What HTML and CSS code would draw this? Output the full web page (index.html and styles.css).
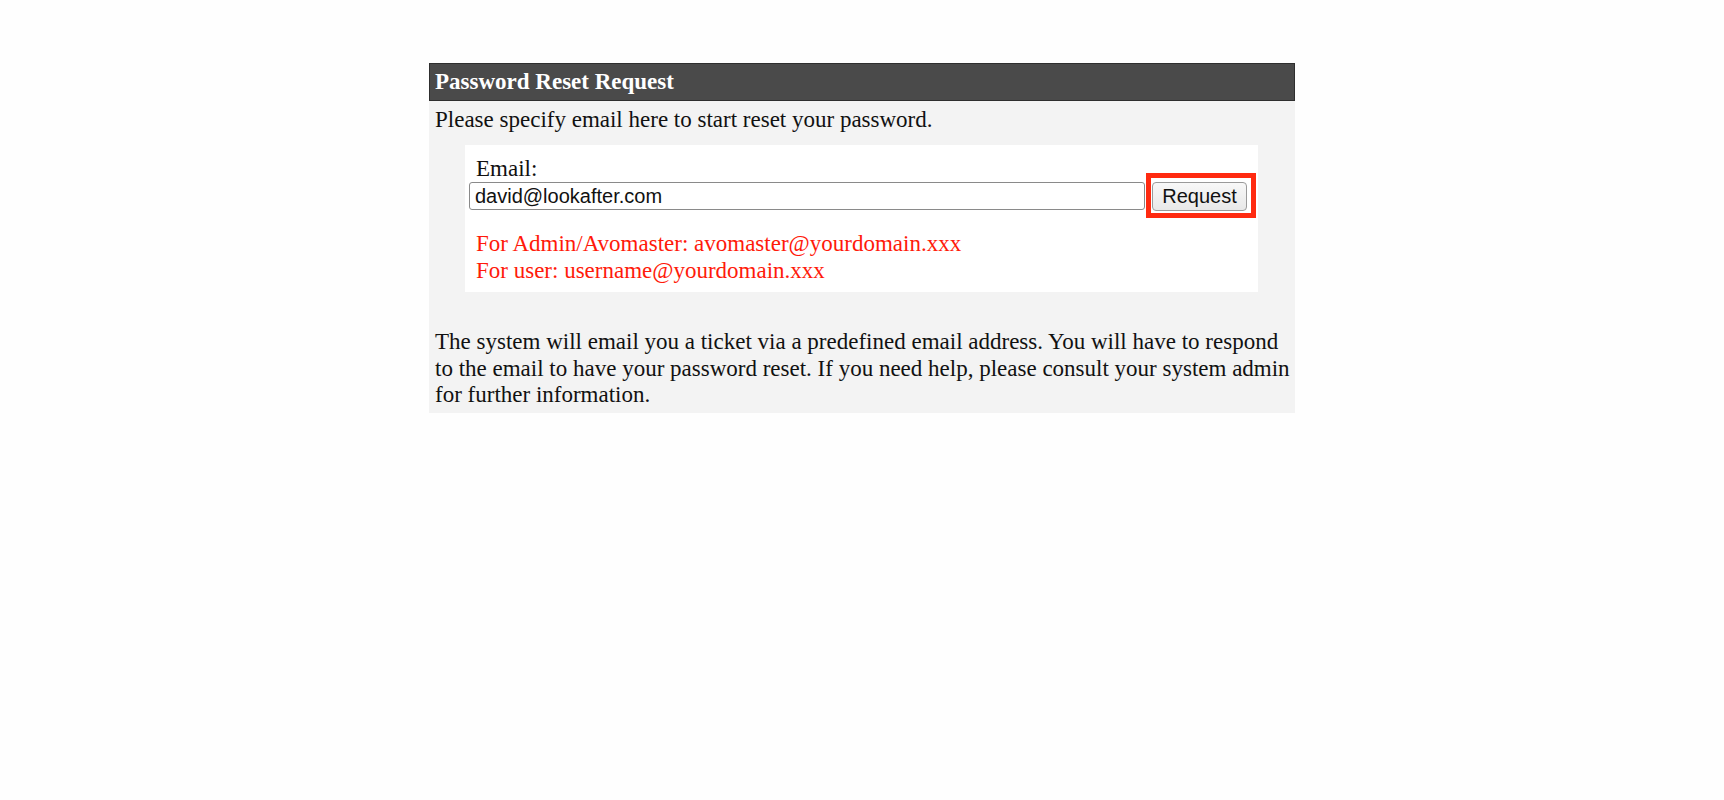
FILE: index.html
```html
<!DOCTYPE html>
<html>
<head>
<meta charset="utf-8">
<title>Password Reset Request</title>
<link rel="stylesheet" href="styles.css">
</head>
<body>
<div class="panel">
  <div class="panel-header">Password Reset Request</div>
  <div class="intro">Please specify email here to start reset your password.</div>
  <div class="form-box">
    <label class="field-label" for="email">Email:</label>
    <div class="field-row">
      <input class="email-input" id="email" type="text" value="david@lookafter.com">
      <span class="highlight"><button class="request-btn" type="button">Request</button></span>
    </div>
    <div class="hints">
      <div>For Admin/Avomaster: avomaster@yourdomain.xxx</div>
      <div>For user: username@yourdomain.xxx</div>
    </div>
  </div>
  <p class="note">The system will email you a ticket via a predefined email address. You will have to respond to the email to have your password reset. If you need help, please consult your system admin for further information.</p>
</div>
</body>
</html>
```
FILE: styles.css
```css
html, body {
  margin: 0;
  padding: 0;
  background: #fefefe;
}
body {
  font-family: "Liberation Serif", "Times New Roman", serif;
  font-size: 23px;
  color: #111;
}
.panel {
  width: 866px;
  margin: 63px auto 0;
  background: #f3f3f3;
  padding-bottom: 4px;
}
.panel-header {
  background: #4a4a4a;
  border: 1px solid #2e2e2e;
  color: #fff;
  font-weight: bold;
  font-size: 23px;
  height: 36px;
  line-height: 36px;
  padding-left: 5px;
}
.intro {
  padding: 6px 6px 0;
  line-height: 26px;
}
.form-box {
  background: #fff;
  margin: 12px 37px 0 36px;
  padding: 11px 0 8px 11px;
}
.field-label {
  display: block;
  line-height: 26px;
}
.field-row {
  display: flex;
  align-items: center;
  margin-left: -7px;
}
.email-input {
  width: 676px;
  height: 28px;
  box-sizing: border-box;
  border: 1px solid #8a8a8a;
  border-radius: 3px;
  padding: 1px 5px;
  font-family: "Liberation Sans", Arial, sans-serif;
  font-size: 20px;
  color: #111;
  background: #fff;
}
.highlight {
  display: inline-flex;
  border: 5px solid #ff2a10;
  padding: 4px 4px 2px 1px;
  margin: -9px 0 -8px 1px;
}
.request-btn {
  width: 95px;
  height: 29px;
  font-family: "Liberation Sans", Arial, sans-serif;
  font-size: 20px;
  color: #111;
  background: linear-gradient(#f8f8f8, #e8e8e8);
  border: 1px solid #9a9a9a;
  border-radius: 4px;
  padding: 0;
}
.hints {
  color: #ff1a0a;
  margin-top: 20px;
  line-height: 27px;
}
.note {
  margin: 0;
  padding: 37px 0 0 6px;
  line-height: 26.5px;
}
```
